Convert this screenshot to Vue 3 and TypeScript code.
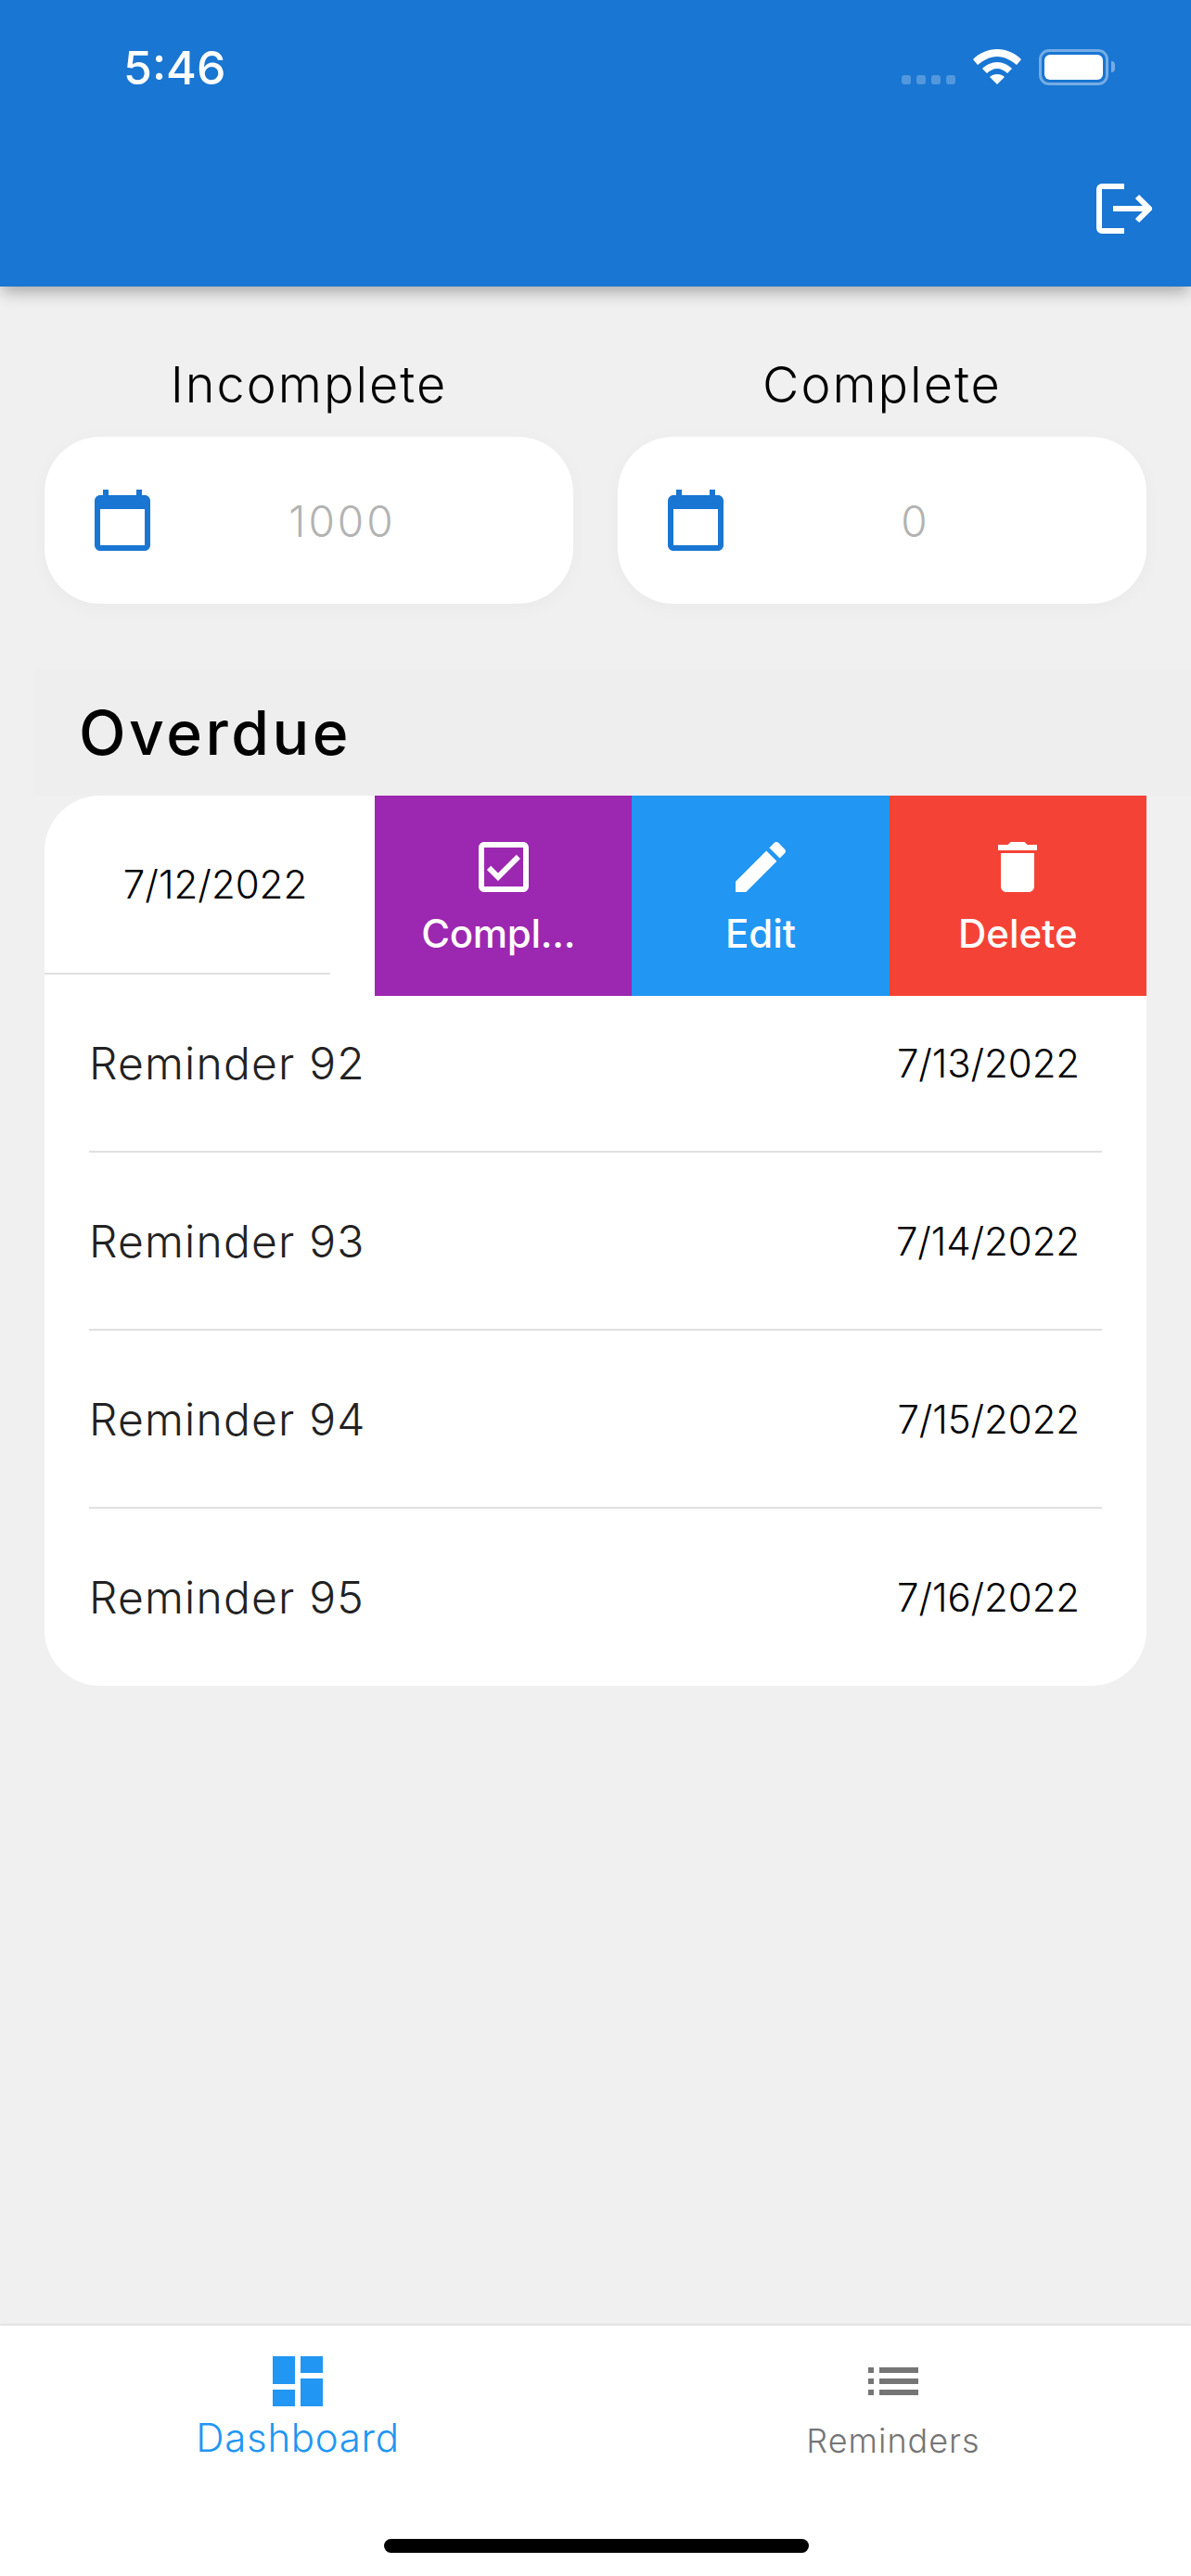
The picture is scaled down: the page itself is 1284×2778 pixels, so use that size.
<script setup lang="ts">
interface Stat { label: string; value: string }
interface Reminder { title: string; date: string }
const stats: Stat[] = [
  { label: 'Incomplete', value: '1000' },
  { label: 'Complete', value: '0' },
]
const reminders: Reminder[] = [
  { title: 'Reminder 92', date: '7/13/2022' },
  { title: 'Reminder 93', date: '7/14/2022' },
  { title: 'Reminder 94', date: '7/15/2022' },
  { title: 'Reminder 95', date: '7/16/2022' },
]
</script>

<template>
  <div class="screen">
    <header class="appbar">
      <div class="status">
        <span class="time">5:46</span>
        <div class="status-icons">
          <div class="signal"><i></i><i></i><i></i><i></i></div>
          <svg class="wifi" viewBox="0 0 52 38" width="52" height="38">
            <path fill="#fff" d="M26 0C16 0 7 4 0 11l5 6c6-5 13-9 21-9s15 4 21 9l5-6C45 4 36 0 26 0z"/>
            <path fill="#fff" d="M26 14c-6 0-12 3-16 7l5 5c3-3 7-5 11-5s8 2 11 5l5-5c-4-4-10-7-16-7z"/>
            <path fill="#fff" d="M26 27c-3 0-6 1-8 3l8 8 8-8c-2-2-5-3-8-3z"/>
          </svg>
          <div class="battery"><div class="battery-fill"></div></div>
          <div class="battery-cap"></div>
        </div>
      </div>
      <div class="appbar-action">
        <svg viewBox="0 0 60 54" width="60" height="54" fill="none" stroke="#fff" stroke-width="6">
          <path d="M30 3H6a3 3 0 0 0-3 3v42a3 3 0 0 0 3 3h24"/>
          <path d="M18 27h36"/>
          <path d="M44 14l13 13-13 13"/>
        </svg>
      </div>
    </header>

    <main class="content">
      <section class="stats">
        <div v-for="s in stats" :key="s.label" class="stat">
          <div class="stat-label">{{ s.label }}</div>
          <div class="stat-card">
            <svg class="cal" viewBox="2 1 20 22" width="60" height="66">
              <path fill="#1976d2" d="M20 3h-1V1h-2v2H7V1H5v2H4c-1.1 0-2 .9-2 2v16c0 1.1.9 2 2 2h16c1.1 0 2-.9 2-2V5c0-1.1-.9-2-2-2zm0 18H4V8h16v13z"/>
            </svg>
            <span class="stat-value">{{ s.value }}</span>
          </div>
        </div>
      </section>

      <h2 class="section-title">Overdue</h2>

      <section class="list">
        <div class="swiped">
          <div class="swiped-main"><span>7/12/2022</span></div>
          <div class="action purple">
            <svg viewBox="3 3 18 18" width="54" height="54">
              <path fill="#fff" d="M19 3H5c-1.1 0-2 .9-2 2v14c0 1.1.9 2 2 2h14c1.1 0 2-.9 2-2V5c0-1.1-.9-2-2-2zm0 16H5V5h14v14zM17.99 9l-1.41-1.42-6.59 6.59-2.58-2.57-1.42 1.41 4 3.99z"/>
            </svg>
            <span class="truncated">Compl...</span>
          </div>
          <div class="action blue">
            <svg viewBox="3 3 18 18" width="54" height="54">
              <path fill="#fff" d="M3 17.25V21h3.75L17.81 9.94l-3.75-3.75L3 17.25zM20.71 7.04c.39-.39.39-1.02 0-1.41l-2.34-2.34c-.39-.39-1.02-.39-1.41 0l-1.83 1.83 3.75 3.75 1.83-1.83z"/>
            </svg>
            <span>Edit</span>
          </div>
          <div class="action red">
            <svg viewBox="5 3 14 18" width="42" height="54">
              <path fill="#fff" d="M6 19c0 1.1.9 2 2 2h8c1.1 0 2-.9 2-2V7H6v12zM19 4h-3.5l-1-1h-5l-1 1H5v2h14V4z"/>
            </svg>
            <span>Delete</span>
          </div>
        </div>
        <div v-for="(r, i) in reminders" :key="r.title" class="row" :class="{ last: i === reminders.length - 1 }">
          <span class="row-title">{{ r.title }}</span>
          <span class="row-date">{{ r.date }}</span>
        </div>
      </section>
    </main>

    <nav class="tabbar">
      <div class="tab active">
        <svg viewBox="3 3 18 18" width="54" height="54">
          <path fill="#2196f3" d="M3 13h8V3H3v10zm0 8h8v-6H3v6zm10 0h8V11h-8v10zm0-18v6h8V3h-8z"/>
        </svg>
        <span>Dashboard</span>
      </div>
      <div class="tab">
        <svg viewBox="0 0 54 30" width="54" height="30">
          <path fill="#757575" d="M0 18h6v-6H0v6zm0 12h6v-6H0v6zM0 6h6V0H0v6zm12 12h42v-6H12v6zm0 12h42v-6H12v6zM12 0v6h42V0H12z"/>
        </svg>
        <span>Reminders</span>
      </div>
      <div class="home-indicator"></div>
    </nav>
  </div>
</template>

<style>
html, body { margin: 0; padding: 0; background: #f0f0f0; }
</style>

<style scoped>
.screen {
  width: 1284px;
  height: 2778px;
  display: flex;
  flex-direction: column;
  background: #f0f0f0;
  font-family: Inter, "Open Sans", sans-serif;
  overflow: hidden;
}
.appbar {
  height: 309px;
  flex: none;
  box-sizing: border-box;
  background: #1976d2;
  box-shadow: 0 8px 16px -2px rgba(0, 0, 0, 0.3);
  position: relative;
  z-index: 1;
  display: flex;
  flex-direction: column;
  padding: 0 42px 0 0;
}
.status {
  height: 146px;
  box-sizing: border-box;
  display: flex;
  justify-content: space-between;
  padding: 49px 40px 0 133px;
  align-items: flex-start;
}
.time {
  color: #fff;
  font: 500 50px/48px Inter, sans-serif;
}
.status-icons {
  display: flex;
  align-items: center;
  height: 38px;
  margin-top: 4px;
}
.wifi { flex: none; }
.signal {
  display: flex;
  gap: 6px;
  margin: 28px 19px 0 0;
}
.signal i {
  width: 10px;
  height: 10px;
  border-radius: 3px;
  background: rgba(255, 255, 255, 0.25);
}
.battery {
  width: 75px;
  height: 39px;
  box-sizing: border-box;
  border: 3px solid rgba(255, 255, 255, 0.4);
  border-radius: 11px;
  padding: 3px;
  margin-left: 19px;
}
.battery-fill { width: 100%; height: 100%; border-radius: 6px; background: #fff; }
.battery-cap {
  width: 4px;
  height: 12px;
  margin-left: 3px;
  border-radius: 0 6px 6px 0;
  background: rgba(255, 255, 255, 0.4);
}
.appbar-action {
  align-self: flex-end;
  margin-top: 52px;
  height: 54px;
}
.appbar-action svg { display: block; }
.content {
  flex: 1;
  display: flex;
  flex-direction: column;
  padding: 0 48px;
}
.stats {
  display: grid;
  grid-template-columns: 570px 570px;
  gap: 48px;
  margin-top: 80px;
}
.stat-label {
  text-align: center;
  font-size: 54px;
  line-height: 52px;
  letter-spacing: 2px;
  color: #000;
  font-weight: 300;
  margin-bottom: 30px;
}
.stat-card {
  height: 180px;
  background: #fff;
  border-radius: 60px;
  box-shadow: 0 4px 20px rgba(0, 0, 0, 0.03);
  display: flex;
  align-items: center;
  padding-left: 54px;
}
.cal { flex: none; }
.stat-value {
  flex: 1;
  text-align: center;
  color: #b3b3b3;
  font-size: 46px;
  font-weight: 300;
  letter-spacing: 3px;
  padding-right: 42px;
  margin-top: 2px;
}
.section-title {
  margin: 71px -48px 0 -12px;
  padding-left: 49px;
  height: 136px;
  display: flex;
  align-items: center;
  font-size: 66px;
  font-weight: 500;
  color: #000;
  letter-spacing: 3.5px;
  background: #eeeeee;
}
.list {
  background: #fff;
  border-radius: 60px;
  display: flex;
  flex-direction: column;
}
.swiped {
  height: 193px;
  display: flex;
  flex: none;
}
.swiped-main {
  width: 308px;
  box-sizing: border-box;
  height: 193px;
  border-bottom: 2px solid #e0e0e0;
  display: flex;
  align-items: center;
  justify-content: center;
  font-size: 42px;
  font-weight: 300;
  color: #000;
  flex: none;
  margin-right: 48px;
  padding-left: 60px;
}
.action {
  width: 277.33px;
  height: 216px;
  flex: none;
  color: #fff;
  display: flex;
  flex-direction: column;
  align-items: center;
  font-size: 42px;
  line-height: 50px;
  font-weight: 500;
  padding-top: 50px;
  box-sizing: border-box;
  gap: 20px;
  position: relative;
}
.action svg { display: block; }
.action .truncated { padding-right: 11px; letter-spacing: -0.3px; }
.purple { background: #9c27b0; }
.blue { background: #2196f3; }
.red { background: #f44336; }
.row {
  height: 192px;
  flex: none;
  box-sizing: border-box;
  margin: 0 48px;
  border-bottom: 2px solid #e0e0e0;
  display: flex;
  align-items: center;
  justify-content: space-between;
  padding: 0 24px 0 0;
  color: #222;
}
.row.last { border-bottom: none; height: 191px; }
.row-title { font-size: 48px; font-weight: 300; letter-spacing: 1.2px; }
.row-date { font-size: 42px; font-weight: 300; letter-spacing: -0.1px; color: #000; }
.tabbar {
  height: 270px;
  flex: none;
  box-sizing: border-box;
  background: #fff;
  box-shadow: 0 -1px 3px rgba(0, 0, 0, 0.1);
  position: relative;
  display: grid;
  grid-template-columns: 642px 642px;
}
.tab {
  display: flex;
  flex-direction: column;
  align-items: center;
  padding-top: 33px;
  color: #757575;
  font-size: 36px;
  font-weight: 300;
  letter-spacing: 1px;
  height: 200px;
  box-sizing: border-box;
}
.tab svg { display: block; }
.tab span { line-height: 44px; }
.tab:not(.active) svg { margin-top: 12px; }
.tab:not(.active) span { margin-top: 27px; }
.tab.active { color: #2196f3; font-size: 42px; letter-spacing: 0.7px; }
.tab.active span { margin-top: 12px; }
.home-indicator {
  position: absolute;
  left: 414px;
  bottom: 25px;
  width: 458px;
  height: 15px;
  border-radius: 8px;
  background: #000;
}
</style>
